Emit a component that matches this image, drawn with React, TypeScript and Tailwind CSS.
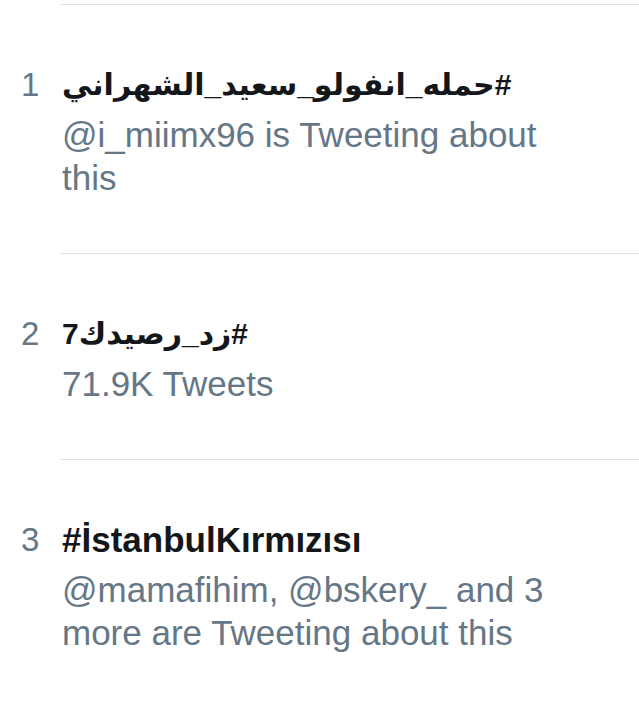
const trends = [
  {
    rank: 1,
    title: "#حمله_انفولو_سعيد_الشهراني",
    rtl: true,
    meta: "@i_miimx96 is Tweeting about this",
  },
  { rank: 2, title: "#زد_رصيدك7", rtl: true, meta: "71.9K Tweets" },
  {
    rank: 3,
    title: "#İstanbulKırmızısı",
    rtl: false,
    meta: "@mamafihim, @bskery_ and 3 more are Tweeting about this",
  },
];

function TrendRow({
  rank,
  title,
  rtl,
  meta,
}: {
  rank: number;
  title: string;
  rtl: boolean;
  meta: string;
}) {
  return (
    <div>
      <div className="ml-[60px] border-t border-[#dfe3e7]" />
      <div className="flex pt-[62px] pb-[54px]">
        <div className="w-[62px] shrink-0 pl-[21px] text-[33px] leading-[36px] text-[#657786]">
          {rank}
        </div>
        <div className="w-[510px] min-w-0">
          {/* arabic hashtags run right-to-left, DejaVu's arabic is wide so a bit smaller */}
          <div
            dir={rtl ? "rtl" : "ltr"}
            className={
              rtl
                ? "w-fit text-[30px] font-bold leading-[36px] text-[#14171a]"
                : "w-fit text-[35px] font-bold leading-[36px] text-[#14171a]"
            }
          >
            {title}
          </div>
          <div className="mt-[10px] text-[35px] leading-[43px] text-[#657786]">{meta}</div>
        </div>
      </div>
    </div>
  );
}

export default function App() {
  return (
    <div className="min-h-screen bg-white pt-[4px] font-['Liberation_Sans','DejaVu_Sans',sans-serif]">
      {trends.map((t) => (
        <TrendRow key={t.rank} {...t} />
      ))}
    </div>
  );
}
